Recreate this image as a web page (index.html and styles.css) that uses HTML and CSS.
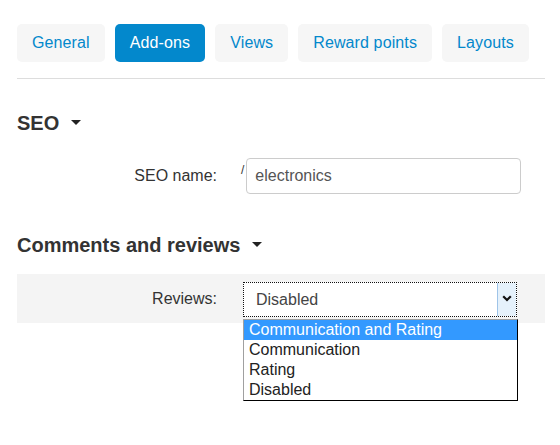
FILE: index.html
```html
<!DOCTYPE html>
<html>
<head>
<meta charset="utf-8">
<link rel="stylesheet" href="styles.css">
</head>
<body>
<div class="page">
  <div class="tabs">
    <span class="tab">General</span>
    <span class="tab active">Add-ons</span>
    <span class="tab">Views</span>
    <span class="tab">Reward points</span>
    <span class="tab">Layouts</span>
  </div>
  <div class="divider"></div>

  <h2 class="section-title">SEO<span class="caret"></span></h2>
  <div class="row">
    <label class="label">SEO name:</label>
    <div class="controls">
      <span class="slash">/</span>
      <div class="input">electronics</div>
    </div>
  </div>

  <h2 class="section-title second">Comments and reviews<span class="caret"></span></h2>
  <div class="row band">
    <label class="label">Reviews:</label>
    <div class="controls">
      <div class="select-wrap">
        <div class="select">
          <span class="select-value">Disabled</span>
          <span class="select-arrow">
            <svg width="10" height="7" viewBox="0 0 10 7"><polyline points="1.2,1.2 5,5 8.8,1.2" fill="none" stroke="#111" stroke-width="2.2"/></svg>
          </span>
        </div>
        <ul class="dropdown">
          <li class="option selected">Communication and Rating</li>
          <li class="option">Communication</li>
          <li class="option">Rating</li>
          <li class="option">Disabled</li>
        </ul>
      </div>
    </div>
  </div>
</div>
</body>
</html>
```

FILE: styles.css
```css
html, body {
  margin: 0;
  padding: 0;
  background: #ffffff;
}
body {
  min-height: 445px;
  font-family: "Liberation Sans", Arial, sans-serif;
  font-size: 16px;
  color: #333333;
}
.page {
  padding: 24px 15px 0 17px;
}
.tabs {
  display: flex;
  gap: 10px;
}
.tab {
  display: block;
  height: 38px;
  line-height: 38px;
  padding: 0 15px;
  border-radius: 5px;
  background: #f6f6f6;
  color: #0388cc;
  white-space: nowrap;
  letter-spacing: 0.12px;
}
.tab.active {
  background: #0388cc;
  color: #ffffff;
}
.divider {
  margin-top: 16px;
  height: 1px;
  background: #dddddd;
}
.section-title {
  margin: 32px 0 0 0;
  font-size: 20px;
  line-height: 24px;
  font-weight: 700;
  color: #333333;
}
.section-title.second {
  margin-top: 39px;
}
.caret {
  display: inline-block;
  width: 0;
  height: 0;
  margin-left: 12px;
  border-top: 5px solid #222222;
  border-left: 5px solid transparent;
  border-right: 5px solid transparent;
  vertical-align: 5px;
}
.row {
  display: flex;
  margin-top: 23px;
}
.label {
  width: 200px;
  flex: none;
  text-align: right;
  line-height: 20px;
  padding-top: 8px;
  color: #333333;
}
.controls {
  display: flex;
  align-items: flex-start;
  padding-left: 24px;
}
.slash {
  font-size: 12px;
  line-height: 14px;
  margin-top: 5px;
  color: #333333;
}
.input {
  box-sizing: border-box;
  width: 275px;
  height: 36px;
  margin-left: 2px;
  padding-left: 8px;
  border: 1px solid #cccccc;
  border-radius: 4px;
  line-height: 34px;
  color: #555555;
}
.band {
  margin-top: 17px;
  background: #f4f4f4;
  padding: 8px 0 6px 0;
}
.band .label {
  padding-top: 7px;
}
.select-wrap {
  position: relative;
  margin-left: 2px;
}
.select {
  box-sizing: border-box;
  width: 274px;
  height: 35px;
  border: 1px dotted #111111;
  background: #ffffff;
  display: flex;
}
.select-value {
  flex: 1;
  padding-left: 12px;
  line-height: 33px;
  color: #444444;
}
.select-arrow {
  width: 19px;
  box-sizing: border-box;
  border-left: 1px solid #9fc4e8;
  background: #e5f1fb;
  display: flex;
  align-items: center;
  justify-content: center;
  padding-bottom: 2px;
}
.dropdown {
  position: absolute;
  z-index: 10;
  top: 37px;
  left: 0;
  box-sizing: border-box;
  width: 275px;
  height: 82px;
  margin: 0;
  padding: 0;
  list-style: none;
  background: #ffffff;
  border: 1px solid #000000;
  border-left-color: #a0a0a0;
  border-top-color: #a0a0a0;
}
.option {
  display: block;
  height: 20px;
  line-height: 20px;
  padding-left: 5px;
  color: #222222;
  white-space: nowrap;
}
.option.selected {
  background: #3399ff;
  color: #ffffff;
}
```
